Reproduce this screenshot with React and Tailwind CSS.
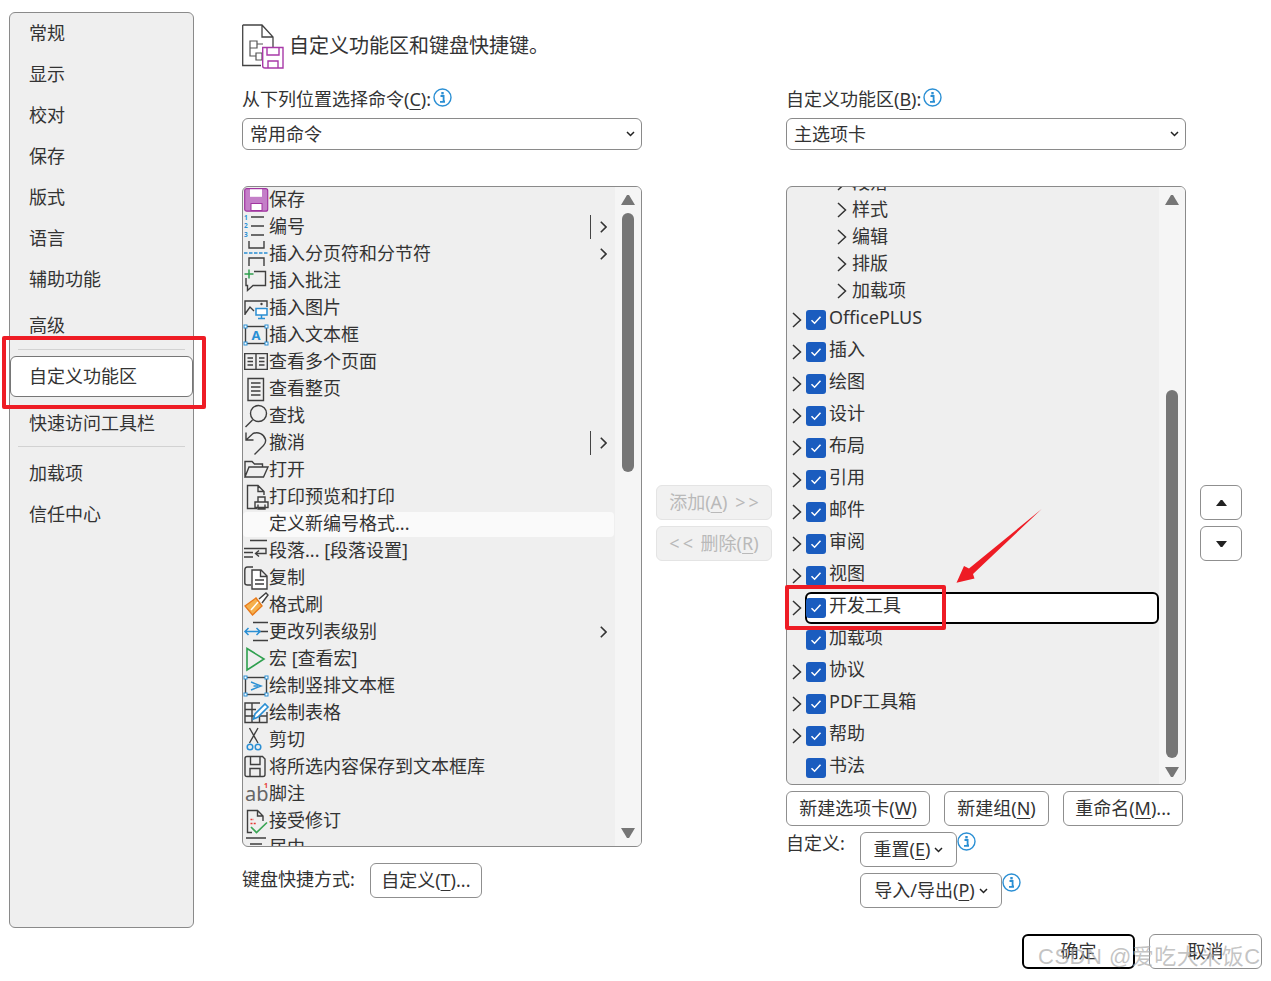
import React from 'react';

const S = '#3f3f3f';
const B = '#2a8fd4';
const L = (p) => <path d={p} fill="none" stroke={S} strokeWidth="1.4" />;
const Bl = (p) => <path d={p} fill="none" stroke={B} strokeWidth="1.5" />;
const Corners = ({ pts }) => pts.map(([x, y]) => <rect key={x + '-' + y} x={x - 1.5} y={y - 1.5} width="3" height="3" fill="#fff" stroke={B} />);

const icons = [
  <g><rect x="0.7" y="2.7" width="23" height="22.5" rx="2" fill="#c47fc8" stroke="#a0359f" strokeWidth="1.2" /><rect x="6" y="3.3" width="12" height="7.5" fill="#fff" /><rect x="7" y="17.5" width="11" height="7" fill="#fff" stroke="#a0359f" /></g>,
  <g>{L('M7 4H20M7 13H20M7 22H20')}<text x="0" y="7" fontSize="6.5" fontWeight="700" fill={B}>1</text><text x="0" y="15" fontSize="6.5" fontWeight="700" fill={B}>2</text><text x="0" y="24" fontSize="6.5" fontWeight="700" fill={B}>3</text></g>,
  <g>{L('M5 1V8H20V1M5 26V18H20V26')}<path d="M0 13H25" stroke={B} strokeWidth="1.3" strokeDasharray="3.5 1.5" /></g>,
  <g>{L('M10 4.5H21.5V18.5H9L3.5 23.5V18.5H2V11')}<path d="M5 2.5V11.5M.5 7H9.5" stroke="#2fa04f" strokeWidth="1.5" /></g>,
  <g>{L('M1 21V7H23V13M1 20L6 13L10 17')}<circle cx="17.5" cy="10" r="1.2" fill={S} /><path d="M12 14.5H23V21H12ZM17.5 21V24M14 24.5H21" fill="#fff" stroke={B} strokeWidth="1.5" /></g>,
  <g><rect x="1.5" y="5.5" width="21" height="17" fill="none" stroke={S} strokeWidth="1.4" /><text x="12" y="19" fontSize="13" fontWeight="700" textAnchor="middle" fill={B}>A</text><Corners pts={[[1.5, 5.5], [22.5, 5.5], [1.5, 22.5], [22.5, 22.5]]} /></g>,
  <g>{L('M.7 5.6H23.3V21.4H.7ZM12 5.6V21.4M3.5 10H9M3.5 13.5H9M3.5 17H9M15 10H20.5M15 13.5H20.5M15 17H20.5')}</g>,
  <g>{L('M4 3.5H19.5V25.5H4ZM7 8H16.5M7 12H16.5M7 16H16.5M7 20H16.5')}</g>,
  <g>{L('M8.5 18L1.5 25')}<circle cx="14.5" cy="11.5" r="8" fill="none" stroke={S} strokeWidth="1.4" /></g>,
  <g>{L('M2 3.5V11H9.5M2 11L9 4.5C14 2.5 20 5 21.5 10.5C22 13 21 15 19.5 16.5L10.5 25.5')}</g>,
  <g>{L('M1 21V5.5H8L10.5 8H18.5V11M1 21L5 11H24L19.5 21Z')}</g>,
  <g>{L('M13 25.5H3.5V2.5H14L20 8.5V12M14 2.5V8.5H20M11 19H24V24.5H11ZM14 19V14H21V19M14 21.5V26H21V21.5')}</g>,
  null,
  <g>{L('M6 3.5H23M0 11.5H22V16.5H12M0 20H9M0 15.5H9')}<path d="M15 13.5L11.5 16.5L15 19.5" fill="none" stroke={S} strokeWidth="1.4" /></g>,
  <g>{L('M9 3H3.5Q.8 3 .8 6V19Q.8 21 3.5 21H7')}<path d="M8 6H17L23 12V25H8ZM16.5 6V12.5H23" fill="#fff" stroke={S} strokeWidth="1.4" />{L('M11 16H20M11 20H20')}</g>,
  <g><path d="M1 15L12 7L18 15L8.5 24Z" fill="#f5b04d" stroke="#e8791a" strokeWidth="1.4" /><path d="M7 19L14 11" stroke="#fff" strokeWidth="1.5" /><path d="M15 8L22 2L24 4L18 12" fill="#fff" stroke={S} strokeWidth="1.4" /></g>,
  <g>{L('M9 4.5H24M14 13.5H24M9 22.5H24')}<path d="M1 13.5H16M4.5 10L1 13.5L4.5 17M12.5 10L16 13.5L12.5 17" fill="none" stroke={B} strokeWidth="1.5" /></g>,
  <g><path d="M3 3.5L20 14L3 25Z" fill="none" stroke="#2fa04f" strokeWidth="1.6" /></g>,
  <g><rect x="1.5" y="5.5" width="21" height="17" fill="none" stroke={S} strokeWidth="1.4" />{Bl('M7 10L17 14L7 18')}{Bl('M9.5 14H14')}<Corners pts={[[1.5, 5.5], [22.5, 5.5], [1.5, 22.5], [22.5, 22.5]]} /></g>,
  <g>{L('M16 4H1V23.5H23V13M1 10.5H12M1 17H23M8 4V23.5M15.5 12V23.5')}<path d="M9.5 20L11 15L21 5L24 8L14 18Z" fill="#fff" stroke={B} strokeWidth="1.6" /></g>,
  <g>{L('M5.5 2L14 17M14 2L5.5 17')}<circle cx="6" cy="21" r="2.8" fill="none" stroke={B} strokeWidth="1.5" /><circle cx="14" cy="21" r="2.8" fill="none" stroke={B} strokeWidth="1.5" /></g>,
  <g>{L('M3 3.5H18.5L21 6V21.5Q21 23.5 19 23.5H3Q1 23.5 1 21.5V5.5Q1 3.5 3 3.5ZM6.5 3.5V11.5H16V3.5M6 23.5V15.5H16V23.5')}</g>,
  <g><text x="1" y="21" fontSize="20" fill="#666" fontFamily="'Noto Sans',sans-serif">ab</text><text x="20" y="8" fontSize="7" fontWeight="700" fill="#e53935">1</text></g>,
  <g>{L('M8 25.5H3.5V3.5H13.5L19 9V14M13.5 3.5V9H19')}<path d="M6.5 12.5H10M6.5 16.5H12" stroke="#e53935" strokeWidth="1.3" strokeDasharray="2 1.2" /><path d="M7 20L12.5 25.5L23 15.5" fill="none" stroke="#3aa655" strokeWidth="1.7" /></g>,
  <g>{L('M2 4H22M6 10H18M2 16H22')}</g>,
];

const leftRows = [
  ['保存'], ['编号', 'bar'], ['插入分页符和分节符', 'arrow'], ['插入批注'], ['插入图片'], ['插入文本框'], ['查看多个页面'], ['查看整页'], ['查找'], ['撤消', 'bar'], ['打开'], ['打印预览和打印'], ['定义新编号格式...'], ['段落... [段落设置]'], ['复制'], ['格式刷'], ['更改列表级别', 'arrow'], ['宏 [查看宏]'], ['绘制竖排文本框'], ['绘制表格'], ['剪切'], ['将所选内容保存到文本框库'], ['脚注'], ['接受修订'], ['居中'],
];

const Chevron = ({ className }) => (
  <svg width="10" height="16" viewBox="0 0 10 16" className={className}><path d="M1 1L8.5 8L1 15" fill="none" stroke="#333" strokeWidth="1.5" /></svg>
);
const MiniChevron = ({ className }) => (
  <svg width="7" height="12" viewBox="0 0 7 12" className={className}><path d="M.8 .8L6 6L.8 11.2" fill="none" stroke="#333" strokeWidth="1.6" /></svg>
);
const Small = ({ className }) => (
  <svg width="9" height="6" viewBox="0 0 9 6" className={className}><path d="M1 1L4.5 4.5L8 1" fill="none" stroke="#222" strokeWidth="1.5" /></svg>
);
const Info = ({ className }) => (
  <svg width="19" height="19" viewBox="0 0 19 19" className={className}><circle cx="9.5" cy="9.5" r="8.5" fill="#fff" stroke={B} strokeWidth="1.4" /><rect x="8.3" y="4" width="2.4" height="2.4" fill={B} /><path d="M7.5 8H10.6V13.5H12M7 13.8H12" fill="none" stroke={B} strokeWidth="1.8" /></svg>
);
const Tri = ({ down, className, color = '#767676' }) => (
  <svg width="14" height="10" viewBox="0 0 14 10" preserveAspectRatio="none" className={className}><path d={down ? 'M0 0H14L8 10H6Z' : 'M6 0H8L14 10H0Z'} fill={color} /></svg>
);
const Key = ({ k }) => <span className="underline underline-offset-[3px] decoration-1">{k}</span>;
const Btn = ({ className = '', children }) => (
  <button className={`h-[35px] bg-white border border-[#8f8f8f] rounded-[6px] flex items-center justify-center text-[18px] text-[#333] ${className}`}>{children}</button>
);
const Select = ({ children }) => (
  <div className="h-[32px] bg-white border border-[#8a8a8a] rounded-[6px] flex items-center pl-[7px] pr-[6px] text-[18px] text-[#333]">
    <span className="flex-1 pt-[1px]">{children}</span><Small />
  </div>
);

const nav1 = ['常规', '显示', '校对', '保存', '版式', '语言', '辅助功能'];

function Sidebar() {
  const row = 'h-[41px] flex items-center pl-[19px] text-[18px] text-[#333]';
  return (
    <div className="ml-[9px] mt-[12px] w-[185px] h-[916px] shrink-0 bg-[#efefef] border border-[#8a8a8a] rounded-[6px] flex flex-col">
      {nav1.map((t) => <div key={t} className={row}>{t}</div>)}
      <div className={`${row} mt-[5px]`}>高级</div>
      <div className="h-px bg-[#d2d2d2] mx-[8px] mt-[3px]" />
      <div className="h-[41px] mt-[6px] flex items-center pl-[18px] bg-white border border-[#767676] rounded-[6px] text-[18px] text-[#333]">自定义功能区</div>
      <div className={`${row} mt-[6px]`}>快速访问工具栏</div>
      <div className="h-px bg-[#d2d2d2] mx-[8px] mt-[2px]" />
      <div className={`${row} mt-[6px]`}>加载项</div>
      <div className={row}>信任中心</div>
    </div>
  );
}

function LeftList() {
  return (
    <div className="h-[661px] bg-[#efefef] border border-[#8a8a8a] rounded-[6px] flex overflow-hidden">
      <div className="flex-1 overflow-hidden -mt-px">
        {leftRows.map(([t, kind], i) => (
          <div key={t} className={`flex items-center pl-px pr-[8px] text-[18px] text-[#333] whitespace-nowrap ${i === 12 ? 'h-[25px] mt-[2px] mr-px bg-[#fafafa] rounded-[4px] pr-[7px]' : 'h-[27px]'}`}>
            <svg width="25" height="27" viewBox="0 0 25 27" className="shrink-0 overflow-visible">{icons[i]}</svg>
            <span className={i === 12 ? '-mt-[2px]' : ''}>{t}</span>
            {kind === 'bar' && <span className="ml-auto w-px h-[24px] bg-[#444]" />}
            {kind === 'bar' && <MiniChevron className="ml-[9px]" />}
            {kind === 'arrow' && <MiniChevron className="ml-auto" />}
          </div>
        ))}
      </div>
      <div className="w-[26px] bg-[#f5f5f5] flex flex-col items-center pt-[8px] pb-[8px]">
        <Tri />
        <div className="w-[12px] h-[259px] mt-[8px] rounded-full bg-[#767676]" />
        <Tri down className="mt-auto" />
      </div>
    </div>
  );
}

const groups = ['段落', '样式', '编辑', '排版', '加载项'];
const tabs = [
  ['OfficePLUS', 1], ['插入', 1], ['绘图', 1], ['设计', 1], ['布局', 1], ['引用', 1], ['邮件', 1], ['审阅', 1], ['视图', 1], ['开发工具', 1, 1], ['加载项', 0], ['协议', 1], ['PDF工具箱', 1], ['帮助', 1], ['书法', 0],
];

function RightList() {
  return (
    <div className="h-[599px] bg-[#efefef] border border-[#8a8a8a] rounded-[6px] flex overflow-hidden">
      <div className="flex-1 overflow-hidden">
        <div className="-mt-[18px]">
          {groups.map((t) => (
            <div key={t} className="h-[27px] flex items-center pl-[50px] text-[18px] text-[#333]">
              <Chevron /><span className="ml-[5px] -mt-[1px]">{t}</span>
            </div>
          ))}
          {tabs.map(([t, chev, sel]) => (
            <div key={t + chev} className="h-[32px] flex items-center pl-[5px] text-[18px] text-[#333]">
              <div className="w-[13px] shrink-0">{chev ? <Chevron className="-mt-[1px]" /> : null}</div>
              <div className={`w-[354px] h-[32px] flex items-center border-2 rounded-[6px] ${sel ? 'border-black bg-white' : 'border-transparent'}`}>
                <span className="-ml-[1px] w-[20px] h-[20px] shrink-0 rounded-[3px] bg-[#1a5cbf] flex items-center justify-center">
                  <svg width="12" height="10" viewBox="0 0 12 10"><path d="M1.5 5.2L4.6 8.2L10.5 1.8" fill="none" stroke="#fff" strokeWidth="1.5" /></svg>
                </span>
                <span className="ml-[3px] pb-[7px] leading-[24px]">{t}</span>
              </div>
            </div>
          ))}
        </div>
      </div>
      <div className="w-[26px] bg-[#f5f5f5] flex flex-col items-center pt-[8px] pb-[7px]">
        <Tri />
        <div className="w-[12px] h-[368px] mt-[185px] rounded-full bg-[#767676]" />
        <Tri down className="mt-auto" />
      </div>
    </div>
  );
}

const disabled = 'h-[35px] w-[116px] bg-[#f1f1f1] border border-[#e4e4e4] rounded-[6px] flex items-center justify-center text-[18px] text-[#b9b9b9] whitespace-pre';

export default function App() {
  return (
    <div className="relative w-[1271px] h-[981px] bg-white overflow-hidden flex items-start font-['Noto_Sans','Noto_Sans_CJK_SC',sans-serif]">
      <Sidebar />
      <div className="ml-[48px] mt-[24px] w-[1020px] shrink-0 flex flex-col">
        <div className="h-[37px] flex items-start">
          <svg width="42" height="46" viewBox="0 0 42 46" className="shrink-0 overflow-visible">
            <path d="M.7 1H20L31 13V23M20 1V13H31M.7 1V41.5H19" fill="#fff" stroke="#444" strokeWidth="1.3" />
            <path d="M8 17H15V24H8ZM14 29H20V36H14ZM8 24V32H14M15 20H21" fill="none" stroke="#555" strokeWidth="1.2" />
            <path d="M20.7 23.5H41V44H23Q20.7 44 20.7 42Z" fill="#fff" stroke="#a83aa8" strokeWidth="1.4" />
            <path d="M25 24V31H37V24M26 44V37H36V44" fill="none" stroke="#a83aa8" strokeWidth="1.4" />
          </svg>
          <span className="ml-[5px] mt-[7px] text-[20px] leading-[30px] text-[#333]">自定义功能区和键盘快捷键。</span>
        </div>
        <div className="mt-[24px] flex items-start">
          <div className="w-[400px] shrink-0 flex flex-col">
            <div className="h-[28px] flex items-center text-[18px] text-[#333]">从下列位置选择命令(<Key k="C" />):<Info className="ml-[2px] -mt-[3px]" /></div>
            <div className="mt-[5px]"><Select>常用命令</Select></div>
            <div className="mt-[36px]"><LeftList /></div>
            <div className="mt-[16px] flex items-center text-[18px] text-[#333]">
              <span className="-mt-[2px]">键盘快捷方式:</span>
              <Btn className="ml-[15px] w-[112px]">自定义(<Key k="T" />)...</Btn>
            </div>
          </div>
          <div className="w-[144px] shrink-0 pt-[400px] flex flex-col items-center gap-[6px]">
            <div className={disabled}>添加(<Key k="A" />) <span className="tracking-[3px] pl-[3px] -mr-[3px]">&gt;&gt;</span></div>
            <div className={disabled}><span className="tracking-[3px]">&lt;&lt;</span> 删除(<Key k="R" />)</div>
          </div>
          <div className="w-[400px] shrink-0 flex flex-col">
            <div className="h-[28px] flex items-center text-[18px] text-[#333]">自定义功能区(<Key k="B" />):<Info className="ml-[2px] -mt-[3px]" /></div>
            <div className="mt-[5px]"><Select>主选项卡</Select></div>
            <div className="mt-[36px]"><RightList /></div>
            <div className="mt-[6px] flex gap-[14px]">
              <Btn className="w-[144px]">新建选项卡(<Key k="W" />)</Btn>
              <Btn className="w-[105px]">新建组(<Key k="N" />)</Btn>
              <Btn className="w-[120px]">重命名(<Key k="M" />)...</Btn>
            </div>
            <div className="mt-[6px] flex items-start">
              <span className="w-[74px] h-[24px] leading-[22px] text-[18px] text-[#333]">自定义:</span>
              <div className="flex flex-col gap-[6px]">
                <div className="flex items-start">
                  <Btn className="w-[97px] gap-[4px]"><span>重置(<Key k="E" />)</span><Small /></Btn>
                  <Info />
                </div>
                <div className="flex items-start">
                  <Btn className="w-[142px] gap-[4px]"><span>导入/导出(<Key k="P" />)</span><Small /></Btn>
                  <Info />
                </div>
              </div>
            </div>
          </div>
          <div className="ml-[14px] w-[42px] shrink-0 pt-[400px] flex flex-col gap-[6px]">
            <Btn className="w-[42px]"><Tri color="#222" className="w-[11px] h-[6px]" /></Btn>
            <Btn className="w-[42px]"><Tri down color="#222" className="w-[11px] h-[6px]" /></Btn>
          </div>
        </div>
        <div className="mt-[26px] flex justify-end gap-[14px]">
          <Btn className="w-[113px] border-2 border-black">确定</Btn>
          <Btn className="w-[113px]">取消</Btn>
        </div>
      </div>

      {/* annotations drawn over the screenshot */}
      <div className="absolute left-[2px] top-[336px] w-[204px] h-[73px] border-4 border-[#ee1c25] rounded-[2px]" />
      <div className="absolute left-[785px] top-[585px] w-[161px] h-[45px] border-4 border-[#ee1c25] rounded-[2px]" />
      <svg className="absolute left-[950px] top-[505px]" width="96" height="82" viewBox="950 505 96 82">
        <path d="M1041.7 509L973 574L974.5 578.5L956.5 582.7L964 566L969 568.5Z" fill="#ee1c25" />
      </svg>
      <div className="absolute left-[1038px] top-[941px] whitespace-nowrap text-[22px] leading-[32px] tracking-[0.5px] text-[#aaaaaa]/70 font-['Liberation_Sans','Noto_Sans_CJK_SC',sans-serif]">CSDN @爱吃大米饭C</div>
    </div>
  );
}
